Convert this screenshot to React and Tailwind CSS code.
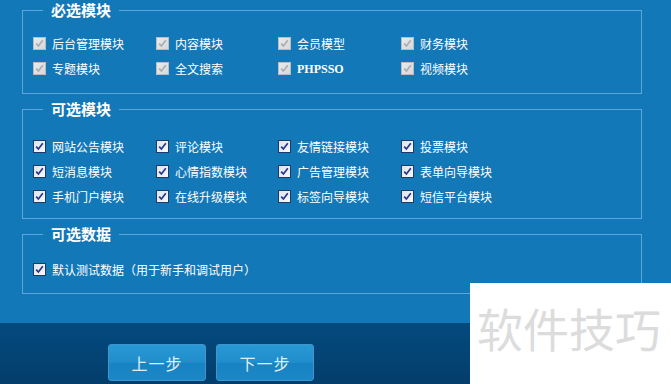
import React from "react";

const CJK = "font-['Noto_Sans_CJK_SC','Noto_Sans',sans-serif]";

function Box({ disabled }) {
  return disabled ? (
    <span className="w-[13px] h-[13px] shrink-0 border border-[#b9bcc0] bg-[linear-gradient(135deg,#e9eaeb,#d6d8da)] flex items-center justify-center">
      <svg width="9" height="9" viewBox="0 0 9 9">
        <path d="M1.2 4.6 L3.4 7 L7.8 1.2" fill="none" stroke="#a9acb0" strokeWidth="1.6" />
      </svg>
    </span>
  ) : (
    <span className="w-[13px] h-[13px] shrink-0 border border-[#1e3a66] bg-[linear-gradient(135deg,#dfe3ea,#f7f8fa)] flex items-center justify-center">
      <svg width="9" height="9" viewBox="0 0 9 9">
        <path d="M1.2 4.6 L3.4 7 L7.8 1.2" fill="none" stroke="#26368a" strokeWidth="1.7" />
      </svg>
    </span>
  );
}

function Item({ label, disabled, serif }) {
  return (
    <div className="h-[25px] flex items-center gap-[6px]">
      <Box disabled={disabled} />
      <span
        className={
          serif
            ? "font-['Liberation_Serif',serif] font-bold text-[12px] text-white leading-none"
            : `${CJK} text-[12px] text-white leading-none`
        }
      >
        {label}
      </span>
    </div>
  );
}

function Legend({ children }) {
  return (
    <legend className={`ml-[10px] px-[8px] h-[18px] leading-[18px] text-[15px] font-bold text-white ${CJK}`}>
      {children}
    </legend>
  );
}

function Group({ title, items, disabled, cls }) {
  return (
    <fieldset className={`w-[620px] border border-[#5ea7dc] pl-[10px] ${cls}`}>
      <Legend>{title}</Legend>
      <div className="grid grid-cols-[123px_122px_123px_122px]">
        {items.map((it) => (
          <Item key={it} label={it} disabled={disabled} serif={it === "PHPSSO"} />
        ))}
      </div>
    </fieldset>
  );
}

export default function App() {
  return (
    <div className={`relative w-[671px] h-[384px] overflow-hidden bg-[#1378b8] ${CJK}`}>
      <div className="h-[323px] px-[22px] pt-[1px]">
        <Group
          title="必选模块"
          disabled
          cls="pt-[12px] pb-[12px]"
          items={["后台管理模块", "内容模块", "会员模型", "财务模块", "专题模块", "全文搜索", "PHPSSO", "视频模块"]}
        />
        <Group
          title="可选模块"
          cls="mt-[6px] pt-[16px] pb-[9px]"
          items={[
            "网站公告模块",
            "评论模块",
            "友情链接模块",
            "投票模块",
            "短消息模块",
            "心情指数模块",
            "广告管理模块",
            "表单向导模块",
            "手机门户模块",
            "在线升级模块",
            "标签向导模块",
            "短信平台模块",
          ]}
        />
        <fieldset className="w-[620px] border border-[#5ea7dc] pl-[10px] mt-[6px] pt-[14px] pb-[11px]">
          <Legend>可选数据</Legend>
          <Item label="默认测试数据（用于新手和调试用户）" />
        </fieldset>
      </div>
      <div className="h-[61px] bg-[linear-gradient(to_bottom,#054a7e,#033e6c)] flex gap-[10px] pl-[108px] pt-[21px]">
        {["上一步", "下一步"].map((t) => (
          <button
            key={t}
            className="w-[98px] h-[37px] rounded-[3px] border border-[#3f95cc] bg-[linear-gradient(to_bottom,#2899d4_0%,#1f8dcb_50%,#1883c2_52%,#1a87c6_100%)] text-[16px] tracking-[1px] text-[#e4ecf2] flex items-center justify-center"
          >
            {t}
          </button>
        ))}
      </div>
      <div className="absolute left-[470px] top-[283px] w-[201px] h-[101px] bg-white flex items-center pl-[7px] pb-[14px]">
        <span className={`text-[46px] leading-none text-[#dcdcdc] ${CJK}`}>软件技巧</span>
      </div>
    </div>
  );
}
